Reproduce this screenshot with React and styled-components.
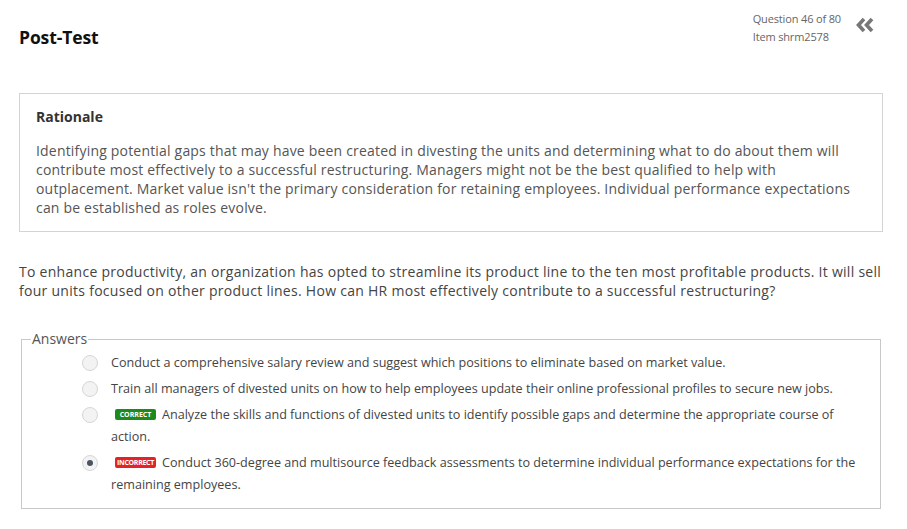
import React from 'react';
import styled, { createGlobalStyle } from 'styled-components';

const GlobalStyle = createGlobalStyle`
  html, body {
    margin: 0;
    padding: 0;
    background: #ffffff;
  }
  body {
    font-family: "Open Sans", "Liberation Sans", Arial, sans-serif;
    color: #444;
  }
`;

const Page = styled.div`
  width: 864px;
  padding: 0 24px 0 19px;
`;

const Header = styled.header`
  display: flex;
  justify-content: space-between;
  align-items: flex-start;
  height: 93px;
`;

const Title = styled.h1`
  margin: 27px 0 0;
  font-size: 17.5px;
  font-weight: 700;
  color: #111;
  letter-spacing: -0.1px;
  line-height: 20px;
`;

const Meta = styled.div`
  display: flex;
  align-items: flex-start;
  gap: 14px;
  margin-top: 10px;
  margin-right: 8px;
`;

const MetaText = styled.div`
  font-size: 11px;
  line-height: 18px;
  color: #666;
  letter-spacing: -0.15px;
`;

const Collapse = styled.button`
  border: 0;
  background: none;
  padding: 0;
  margin-top: 7px;
  cursor: pointer;
  display: flex;
`;

const RationaleBox = styled.section`
  border: 1px solid #d4d4d4;
  padding: 13px 16px 14px;
`;

const RationaleTitle = styled.h2`
  margin: 0 0 14px;
  font-size: 14px;
  font-weight: 700;
  line-height: 20px;
  color: #333;
`;

const Paragraph = styled.p`
  margin: 0;
  font-size: 14px;
  letter-spacing: 0.19px;
  line-height: 19px;
  color: #555;
`;

const Question = styled.p`
  margin: 30px 0 29px;
  font-size: 14px;
  letter-spacing: 0.28px;
  line-height: 19px;
  color: #444;
`;

const Fieldset = styled.fieldset`
  margin: 0 2px;
  border: 1px solid #c8c8c8;
  padding: 3px 20px 8px 60px;
`;

const Legend = styled.legend`
  font-size: 14px;
  color: #555;
  padding: 0 1px;
  margin-left: -51px;
  line-height: 20px;
`;

const Option = styled.label`
  display: flex;
  align-items: flex-start;
  gap: 13px;
  margin-bottom: 4px;
  font-size: 12.6px;
  line-height: 22px;
  color: #444;
`;

const Radio = styled.span`
  flex: 0 0 auto;
  width: 14px;
  height: 14px;
  margin-top: 3px;
  border-radius: 50%;
  border: 1px solid #d6d6d6;
  background: #f3f3f3;
  display: flex;
  align-items: center;
  justify-content: center;

  &::after {
    content: '';
    width: 6px;
    height: 6px;
    border-radius: 50%;
    background: ${({ checked }) => (checked ? '#4a5563' : 'transparent')};
  }
`;

const Badge = styled.span`
  display: inline-block;
  vertical-align: middle;
  position: relative;
  top: -1px;
  margin: 0 6px 0 4px;
  width: 41px;
  height: 11px;
  line-height: 11px;
  border-radius: 2px;
  font-size: 7px;
  font-weight: 700;
  text-align: center;
  color: #fff;
  letter-spacing: ${({ kind }) => (kind === 'correct' ? '0' : '-0.3px')};
  background: ${({ kind }) => (kind === 'correct' ? '#1d8a1d' : '#e3232a')};
`;

const answers = [
  {
    text: 'Conduct a comprehensive salary review and suggest which positions to eliminate based on market value.',
  },
  {
    text: 'Train all managers of divested units on how to help employees update their online professional profiles to secure new jobs.',
  },
  {
    text: 'Analyze the skills and functions of divested units to identify possible gaps and determine the appropriate course of action.',
    badge: 'correct',
  },
  {
    text: 'Conduct 360-degree and multisource feedback assessments to determine individual performance expectations for the remaining employees.',
    badge: 'incorrect',
    checked: true,
  },
];

const App = () => (
  <>
    <GlobalStyle />
    <Page>
      <Header>
        <Title>Post-Test</Title>
        <Meta>
          <MetaText>
            Question 46 of 80
            <br />
            Item shrm2578
          </MetaText>
          <Collapse aria-label="Collapse">
            <svg width="20" height="16" viewBox="0 0 20 16">
              <polyline points="9,2 3.5,8 9,14" fill="none" stroke="#777" strokeWidth="3.6" />
              <polyline points="17,2 11.5,8 17,14" fill="none" stroke="#777" strokeWidth="3.6" />
            </svg>
          </Collapse>
        </Meta>
      </Header>

      <RationaleBox>
        <RationaleTitle>Rationale</RationaleTitle>
        <Paragraph>
          Identifying potential gaps that may have been created in divesting the units and determining what to do about them will
          contribute most effectively to a successful restructuring. Managers might not be the best qualified to help with
          outplacement. Market value isn't the primary consideration for retaining employees. Individual performance expectations
          can be established as roles evolve.
        </Paragraph>
      </RationaleBox>

      <Question>
        To enhance productivity, an organization has opted to streamline its product line to the ten most profitable products. It will sell
        four units focused on other product lines. How can HR most effectively contribute to a successful restructuring?
      </Question>

      <Fieldset>
        <Legend>Answers</Legend>
        {answers.map((a, i) => (
          <Option key={i}>
            <Radio checked={a.checked} />
            <span>
              {a.badge && <Badge kind={a.badge}>{a.badge.toUpperCase()}</Badge>}
              {a.text}
            </span>
          </Option>
        ))}
      </Fieldset>
    </Page>
  </>
);

export default App;
